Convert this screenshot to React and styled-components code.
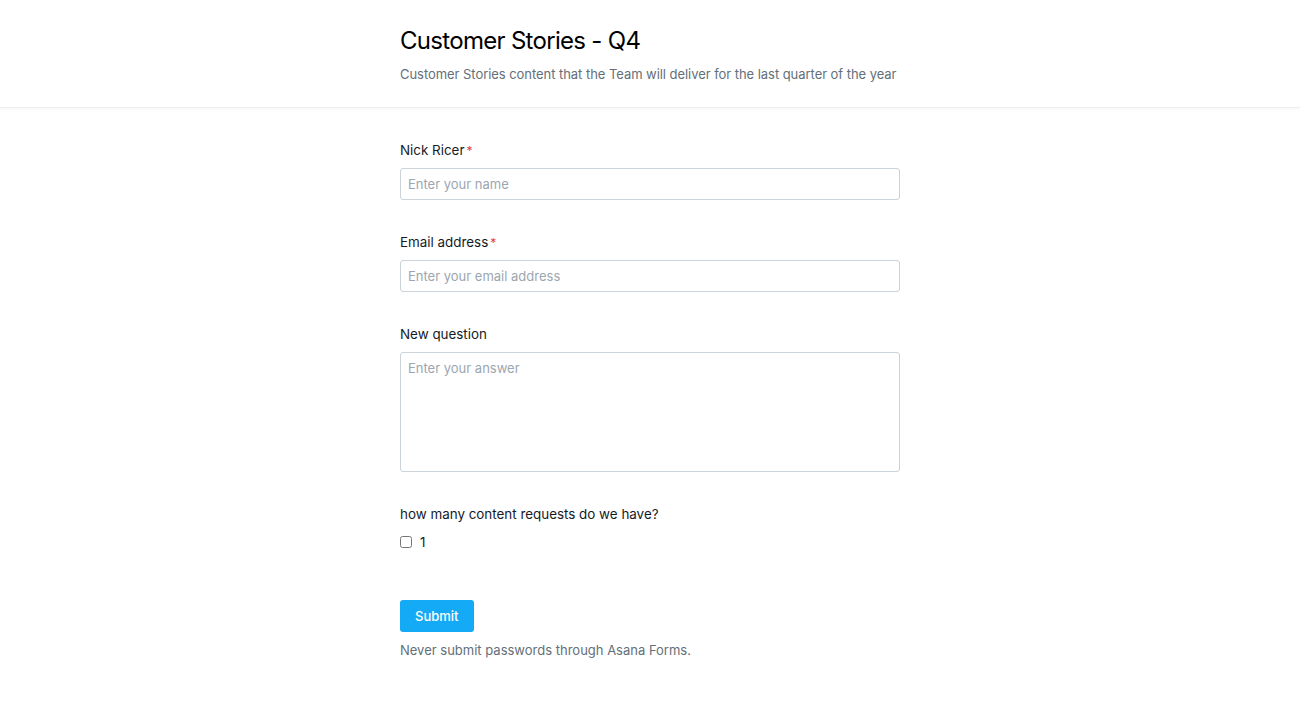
import React from "react";
import styled, { createGlobalStyle } from "styled-components";

const GlobalStyle = createGlobalStyle`
  html, body {
    margin: 0;
    padding: 0;
    background: #fff;
    font-family: Inter, "Liberation Sans", sans-serif;
    color: #151b26;
  }
`;

const fields = [
  { label: "Nick Ricer", required: true, placeholder: "Enter your name" },
  { label: "Email address", required: true, placeholder: "Enter your email address" },
];

const App = () => {
  return (
    <>
      <GlobalStyle />
      <Header>
        <Column>
          <Title>Customer Stories - Q4</Title>
          <Subtitle>
            Customer Stories content that the Team will deliver for the last quarter of the year
          </Subtitle>
        </Column>
      </Header>
      <Form>
        <Column>
          {fields.map((f) => (
            <Field key={f.label}>
              <Label>
                {f.label}
                {f.required && <Star>*</Star>}
              </Label>
              <Input placeholder={f.placeholder} />
            </Field>
          ))}
          <Field>
            <Label>New question</Label>
            <TextArea placeholder="Enter your answer" />
          </Field>
          <Field $last>
            <Label>how many content requests do we have?</Label>
            <CheckRow>
              <Checkbox type="checkbox" />
              <span>1</span>
            </CheckRow>
          </Field>
          <SubmitButton type="button">Submit</SubmitButton>
          <Note>Never submit passwords through Asana Forms.</Note>
        </Column>
      </Form>
    </>
  );
};

export default App;

const Header = styled.header`
  border-bottom: 1px solid #eceef0;
  box-shadow: 0 1px 2px rgba(0, 0, 0, 0.03);
  padding: 27px 0 25px;
`;

const Column = styled.div`
  width: 500px;
  margin: 0 auto;
  display: flex;
  flex-direction: column;
  align-items: flex-start;
`;

const Title = styled.h1`
  margin: 0;
  font-size: 24px;
  font-weight: 400;
  line-height: 28px;
  letter-spacing: -0.7px;
  color: #000;
`;

const Subtitle = styled.p`
  margin: 11px 0 0;
  font-size: 13px;
  line-height: 16px;
  letter-spacing: -0.05px;
  white-space: nowrap;
  color: #646f79;
`;

const Form = styled.main`
  padding-top: 34px;
`;

const Field = styled.div`
  width: 100%;
  display: flex;
  flex-direction: column;
  gap: 9px;
  margin-bottom: ${(p) => (p.$last ? "50px" : "34px")};
`;

const Label = styled.label`
  font-size: 13.4px;
  line-height: 16px;
  color: #151b26;
`;

const Star = styled.span`
  color: #e8384f;
  margin-left: 2px;
  font-size: 12px;
`;

const Input = styled.input`
  box-sizing: border-box;
  width: 100%;
  height: 32px;
  padding: 0 7px;
  border: 1px solid #cbd4db;
  border-radius: 3px;
  font-family: inherit;
  font-size: 13px;
  color: #151b26;
  outline: none;
  &::placeholder {
    color: #9ca6af;
  }
`;

const TextArea = styled.textarea`
  box-sizing: border-box;
  display: block;
  width: 100%;
  height: 120px;
  margin-top: 1px;
  padding: 7px;
  border: 1px solid #cbd4db;
  border-radius: 3px;
  font-family: inherit;
  font-size: 13px;
  line-height: 16px;
  resize: none;
  outline: none;
  &::placeholder {
    color: #9ca6af;
  }
`;

const CheckRow = styled.label`
  display: flex;
  align-items: center;
  gap: 8px;
  font-size: 13.4px;
  line-height: 16px;
  margin-top: 3px;
`;

const Checkbox = styled.input`
  margin: 0;
  width: 12px;
  height: 12px;
`;

const SubmitButton = styled.button`
  height: 32px;
  padding: 0 15px;
  border: none;
  border-radius: 3px;
  background: #14aaf5;
  color: #fff;
  font-family: inherit;
  font-size: 13px;
  font-weight: 500;
  cursor: pointer;
`;

const Note = styled.p`
  margin: 10px 0 0;
  font-size: 13px;
  line-height: 16px;
  color: #646f79;
`;
